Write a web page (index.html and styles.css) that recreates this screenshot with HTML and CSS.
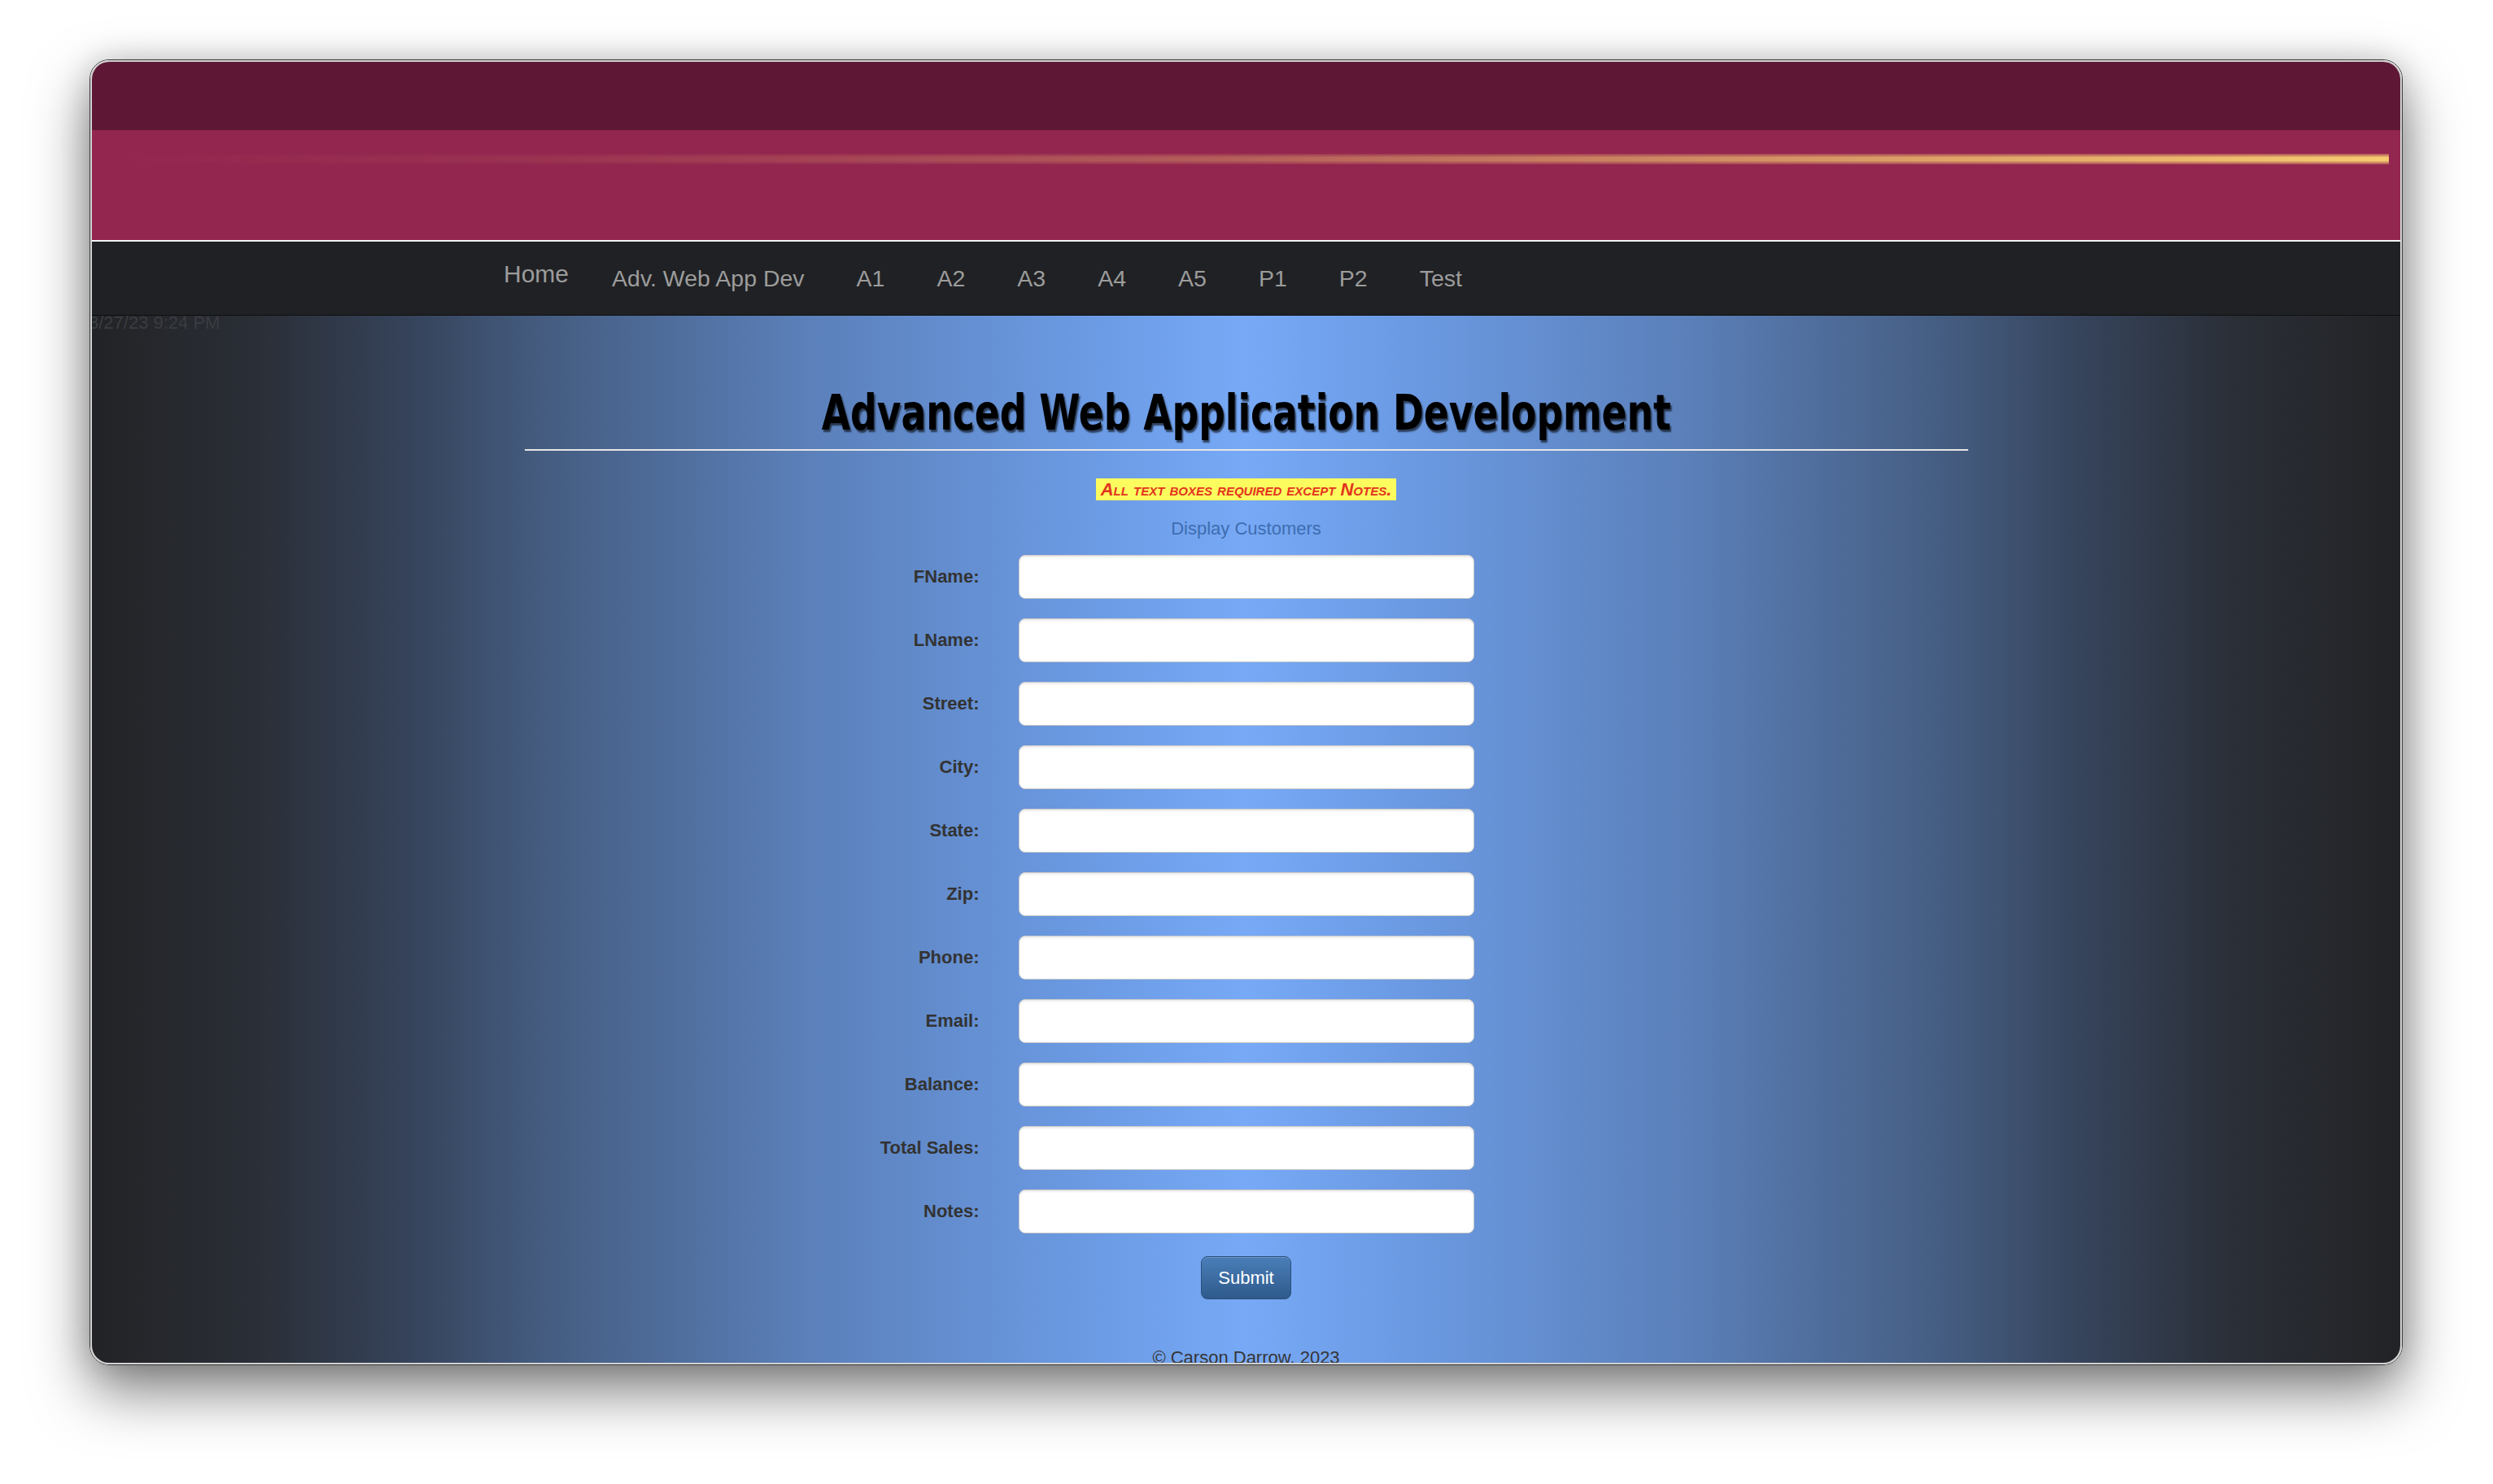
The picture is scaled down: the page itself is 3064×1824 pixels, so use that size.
FILE: index.html
```html
<!DOCTYPE html>
<html lang="en">
<head>
<meta charset="utf-8">
<title>Advanced Web Application Development</title>
<link rel="stylesheet" href="styles.css">
</head>
<body>
<div class="window">
  <div class="frame">
    <header class="banner">
      <div class="banner-top"></div>
      <div class="banner-main"><div class="gold-line"></div></div>
    </header>
    <nav class="navbar">
      <a class="brand" href="#">Home</a>
      <a class="nav-link" href="#">Adv. Web App Dev</a>
      <a class="nav-link" href="#">A1</a>
      <a class="nav-link" href="#">A2</a>
      <a class="nav-link" href="#">A3</a>
      <a class="nav-link" href="#">A4</a>
      <a class="nav-link" href="#">A5</a>
      <a class="nav-link" href="#">P1</a>
      <a class="nav-link" href="#">P2</a>
      <a class="nav-link" href="#">Test</a>
    </nav>
    <main class="page">
      <div class="timestamp">3/27/23 9:24 PM</div>
      <div class="container">
        <h1 class="title"><span class="title-text">Advanced Web Application Development</span></h1>
        <hr class="rule">
        <p class="notice"><span>All text boxes required except Notes.</span></p>
        <p class="display-link"><a href="#">Display Customers</a></p>
        <form class="customer-form">
          <div class="form-row"><label for="fname">FName:</label><input id="fname" type="text"></div>
          <div class="form-row"><label for="lname">LName:</label><input id="lname" type="text"></div>
          <div class="form-row"><label for="street">Street:</label><input id="street" type="text"></div>
          <div class="form-row"><label for="city">City:</label><input id="city" type="text"></div>
          <div class="form-row"><label for="state">State:</label><input id="state" type="text"></div>
          <div class="form-row"><label for="zip">Zip:</label><input id="zip" type="text"></div>
          <div class="form-row"><label for="phone">Phone:</label><input id="phone" type="text"></div>
          <div class="form-row"><label for="email">Email:</label><input id="email" type="text"></div>
          <div class="form-row"><label for="balance">Balance:</label><input id="balance" type="text"></div>
          <div class="form-row"><label for="sales">Total Sales:</label><input id="sales" type="text"></div>
          <div class="form-row"><label for="notes">Notes:</label><input id="notes" type="text"></div>
          <div class="actions"><button type="button" class="submit">Submit</button></div>
        </form>
        <footer class="footer">&copy; Carson Darrow, 2023</footer>
      </div>
    </main>
  </div>
</div>
</body>
</html>
```
FILE: styles.css
```css
html, body {
  margin: 0;
  padding: 0;
}

html {
  background: #ffffff;
}

body {
  min-height: 1824px;
  box-sizing: border-box;
  padding-top: 73px;
  background: #ffffff;
  font-family: "Liberation Sans", Arial, Helvetica, sans-serif;
}

.window {
  width: 2843px;
  height: 1605px;
  margin-left: 110px;
  box-sizing: border-box;
  border: 1px solid #3a3a3a;
  border-radius: 24px;
  box-shadow: 0 32px 70px rgba(0, 0, 0, 0.5), 0 0 36px rgba(0, 0, 0, 0.16);
}

.frame {
  height: 100%;
  box-sizing: border-box;
  border: 2px solid #d3d3d3;
  border-radius: 23px;
  overflow: hidden;
}

.banner-top {
  height: 84px;
  background: #5e1835;
}

.banner-main {
  height: 135px;
  box-sizing: border-box;
  padding-top: 29px;
  background: #93264f;
}

.gold-line {
  height: 13px;
  margin-right: 14px;
  background: linear-gradient(to right,
    rgba(246, 204, 112, 0) 0%,
    rgba(246, 204, 112, 0.08) 20%,
    rgba(246, 204, 112, 0.35) 50%,
    rgba(246, 204, 112, 0.75) 80%,
    #f6cc70 100%);
  -webkit-mask-image: linear-gradient(to bottom, rgba(0,0,0,0.25) 0%, #000 35%, #000 65%, rgba(0,0,0,0.25) 100%);
  mask-image: linear-gradient(to bottom, rgba(0,0,0,0.25) 0%, #000 35%, #000 65%, rgba(0,0,0,0.25) 100%);
}

.navbar {
  height: 90px;
  border-top: 2px solid #f4f4f4;
  border-bottom: 1px solid #0e0f10;
  background: #202124;
  display: flex;
  align-items: center;
  padding-left: 506px;
}

.brand,
.nav-link {
  color: #9c9c9c;
  text-decoration: none;
  white-space: nowrap;
}

.brand {
  font-size: 30px;
  line-height: 34px;
  margin-right: 53px;
  margin-bottom: 11px;
}

.nav-link {
  font-size: 28.5px;
  line-height: 32px;
  margin-right: 64px;
}

.page {
  min-height: 1400px;
  background: linear-gradient(to right,
    #222326 0%,
    #2a2e36 7%,
    #36445c 14%,
    #435a7d 19%,
    #5b80ba 31%,
    #6b9ae3 43%,
    #77a9f6 50%,
    #6b9ae3 57%,
    #5b80ba 69%,
    #435a7d 81%,
    #36445c 86%,
    #2a2e36 93%,
    #222326 100%);
}

.timestamp {
  font-size: 22px;
  line-height: 18px;
  padding-bottom: 6px;
  color: #3a3c41;
  text-indent: -4px;
}

.container {
  width: 1774px;
  margin: 0 auto;
}

.title {
  margin: 57px 0 0;
  font-family: "DejaVu Sans Condensed", "DejaVu Sans", sans-serif;
  font-stretch: condensed;
  font-weight: bold;
  font-size: 60px;
  line-height: 76px;
  text-align: center;
  color: #000;
}

.title-text {
  display: inline-block;
  transform: scaleX(0.845);
  text-shadow: 2px 3px 2px rgba(0, 0, 0, 0.6);
}

.rule {
  margin: 7px 0 0;
  height: 2px;
  border: 0;
  background: #e6e6e6;
}

.notice {
  margin: 34px 0 0;
  text-align: center;
  font-size: 22px;
  line-height: 27px;
}

.notice span {
  display: inline-block;
  padding: 0 6px;
  background: #fcfc5e;
  color: #e3341d;
  font-weight: bold;
  font-style: italic;
  font-variant: small-caps;
}

.display-link {
  margin: 22px 0 0;
  text-align: center;
  font-size: 22px;
  line-height: 26px;
}

.display-link a {
  color: #3e6db0;
  text-decoration: none;
}

.customer-form {
  margin-top: 19px;
  display: flex;
  flex-direction: column;
  gap: 24px;
}

.form-row {
  display: grid;
  grid-template-columns: 1fr 560px 1fr;
  column-gap: 48px;
  align-items: center;
}

.form-row label {
  text-align: right;
  font-weight: bold;
  font-size: 22px;
  color: #333;
}

.form-row input {
  width: 100%;
  height: 54px;
  box-sizing: border-box;
  margin: 0;
  border: 1px solid #c9c9c9;
  border-radius: 8px;
  background: #fff;
  box-shadow: inset 0 2px 2px rgba(0, 0, 0, 0.08);
}

.actions {
  margin-top: 4px;
  text-align: center;
}

.submit {
  width: 111px;
  height: 53px;
  padding: 0;
  font-family: "Liberation Sans", Arial, sans-serif;
  font-size: 22px;
  color: #fff;
  background: linear-gradient(to bottom, #4a7eb9, #2f5a8b);
  border: 1px solid #2b4f7c;
  border-radius: 8px;
  box-shadow: inset 0 1px 0 rgba(255, 255, 255, 0.2);
}

.footer {
  margin-top: 59px;
  text-align: center;
  font-size: 22px;
  line-height: 26px;
  color: #363636;
}
```
